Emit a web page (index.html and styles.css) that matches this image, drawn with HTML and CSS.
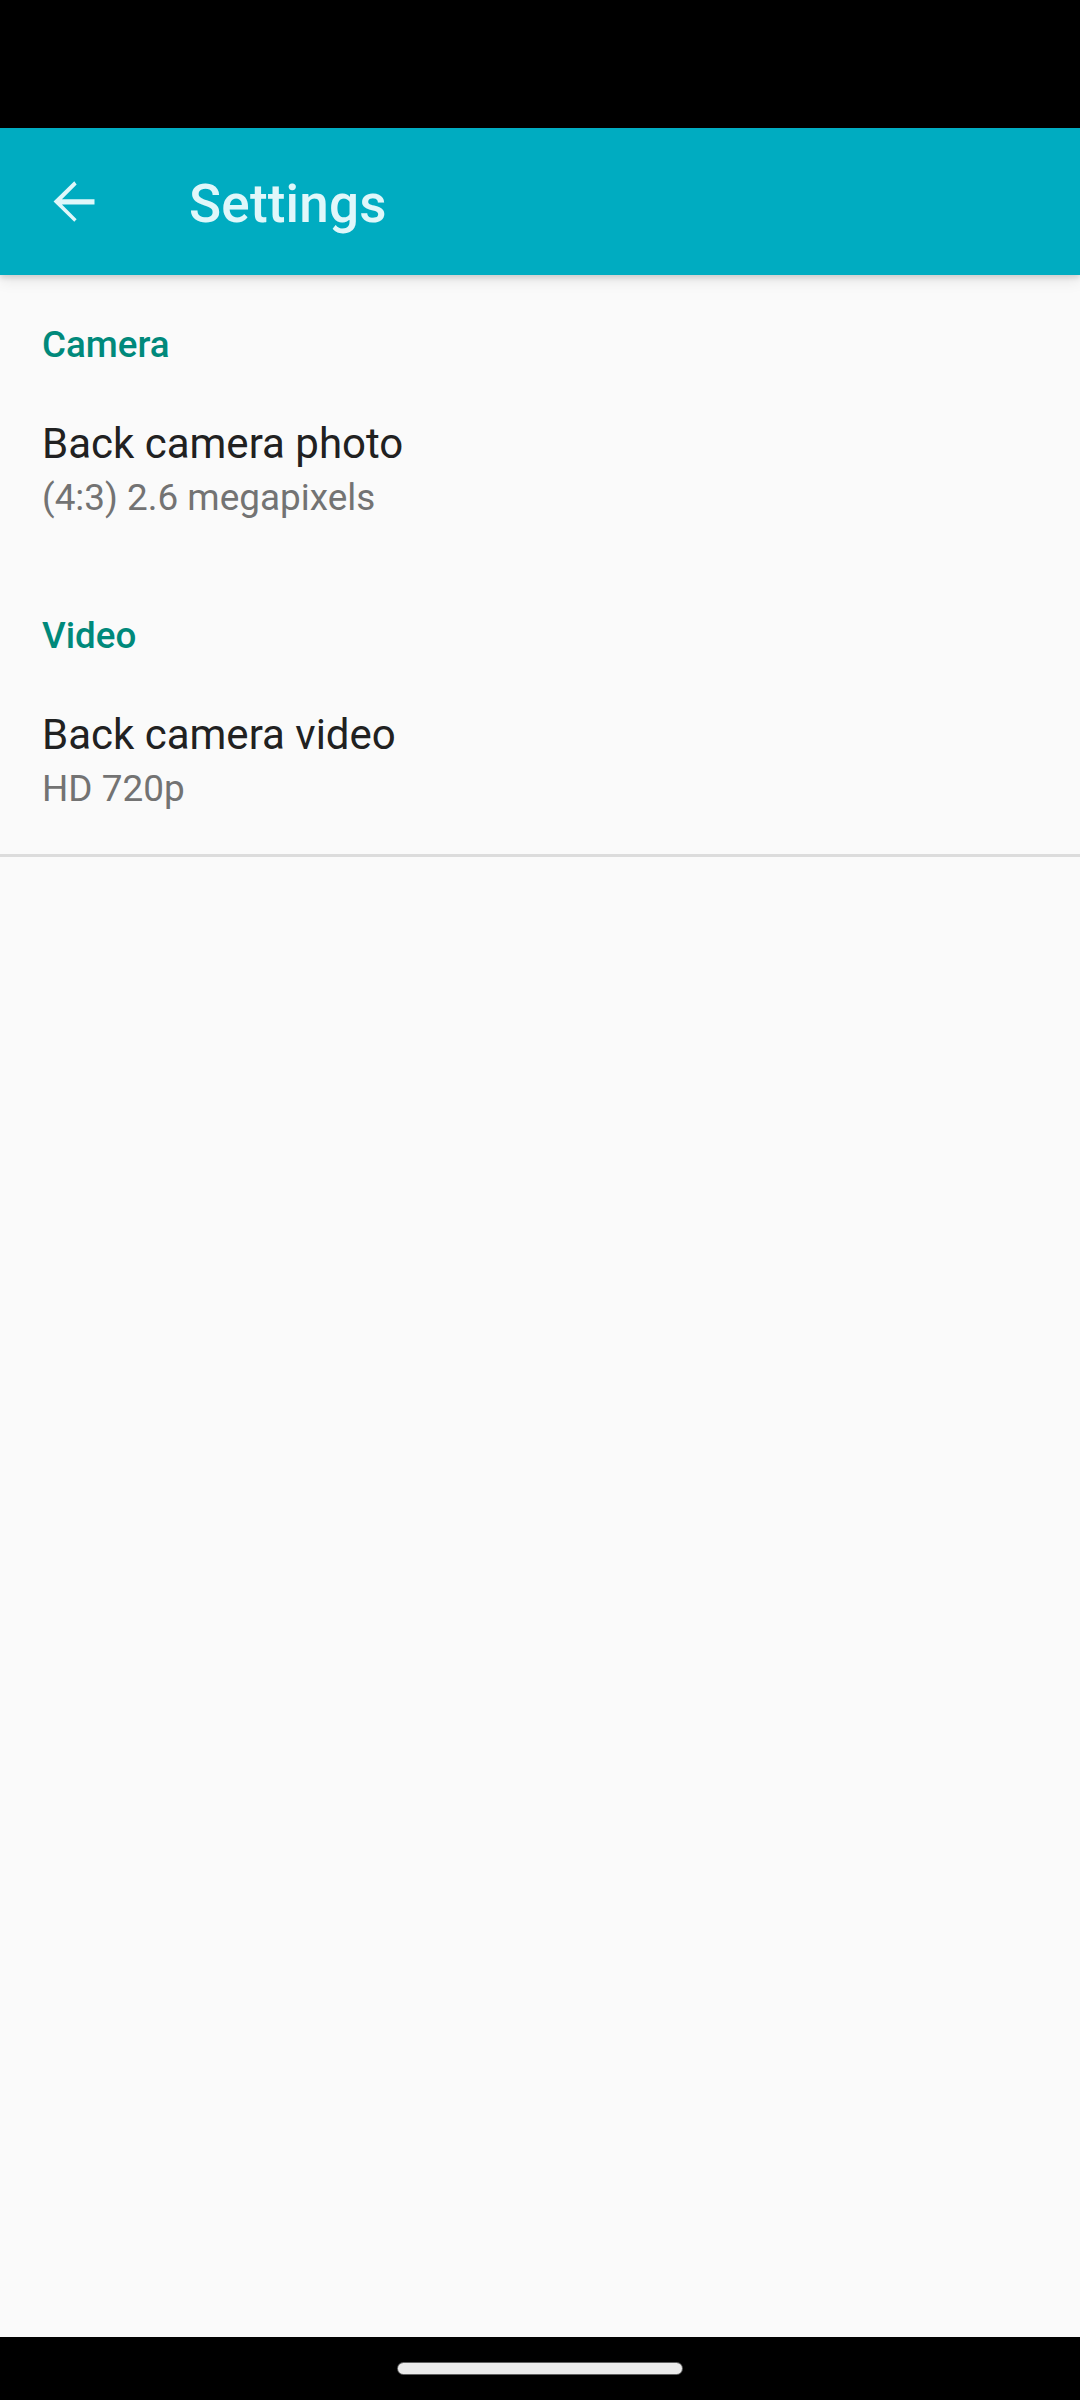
FILE: index.html
```html
<!DOCTYPE html>
<html lang="en">
<head>
<meta charset="utf-8">
<title>Settings</title>
<link rel="stylesheet" href="styles.css">
</head>
<body>
<div class="screen">
  <div class="status-bar"></div>
  <header class="app-bar">
    <div class="nav-button">
      <svg class="back-icon" viewBox="0 0 24 24" width="63" height="63" aria-hidden="true">
        <path d="M20 11.1H7.6l5.6-5.6L12.3 4.3 4.4 12l7.9 7.7 0.9-0.9-5.6-5.7H20v-1.8z" fill="currentColor"/>
      </svg>
    </div>
    <h1 class="app-title">Settings</h1>
  </header>
  <main class="content">
    <section class="pref-group">
      <div class="category">Camera</div>
      <div class="pref-item">
        <div class="pref-title">Back camera photo</div>
        <div class="pref-summary">(4:3) 2.6 megapixels</div>
      </div>
    </section>
    <section class="pref-group">
      <div class="category">Video</div>
      <div class="pref-item last">
        <div class="pref-title">Back camera video</div>
        <div class="pref-summary">HD 720p</div>
      </div>
    </section>
    <div class="divider"></div>
  </main>
  <footer class="nav-bar">
    <div class="handle"></div>
  </footer>
</div>
</body>
</html>
```
FILE: styles.css
```css
* {
  box-sizing: border-box;
}

html, body {
  margin: 0;
  padding: 0;
  background: #000;
}

body {
  font-family: Roboto, "Noto Sans", "Liberation Sans", sans-serif;
}

.screen {
  width: 1080px;
  height: 2400px;
  display: flex;
  flex-direction: column;
  overflow: hidden;
}

.status-bar {
  height: 128px;
  flex: 0 0 128px;
  background: #000;
}

.app-bar {
  height: 147px;
  flex: 0 0 147px;
  background: #00acc1;
  display: flex;
  align-items: center;
  position: relative;
  z-index: 2;
  box-shadow: 0 3px 5px rgba(0, 0, 0, 0.12), 0 6px 14px rgba(0, 0, 0, 0.08);
}

.nav-button {
  width: 147px;
  height: 147px;
  display: flex;
  align-items: center;
  justify-content: center;
  color: #e0f7fa;
}

.back-icon {
  display: block;
}

.app-title {
  margin: 0 0 0 42px;
  padding-top: 5px;
  font-size: 53px;
  font-weight: 500;
  color: #e0f7fa;
  line-height: normal;
  letter-spacing: 0.2px;
}

.content {
  flex: 1 1 auto;
  background: #fafafa;
  position: relative;
  z-index: 1;
}

.category {
  padding: 46px 42px 0;
  font-size: 36.75px;
  line-height: 48px;
  font-weight: 500;
  color: #00897b;
}

.pref-item {
  padding: 47px 42px 44px;
}

.pref-item.last {
  padding-bottom: 41px;
}

.pref-title {
  font-size: 42px;
  line-height: 56px;
  color: #212121;
}

.pref-summary {
  margin-top: 2px;
  font-size: 36.9px;
  line-height: 48px;
  color: #737373;
}

.divider {
  height: 3px;
  background: #dcdcdc;
}

.nav-bar {
  height: 63px;
  flex: 0 0 63px;
  background: #000;
  display: flex;
  align-items: center;
  justify-content: center;
}

.handle {
  width: 284px;
  height: 11px;
  border-radius: 6px;
  background: #ebebeb;
  box-shadow: 0 0 0 1px rgba(160, 160, 160, 0.6);
}
```
